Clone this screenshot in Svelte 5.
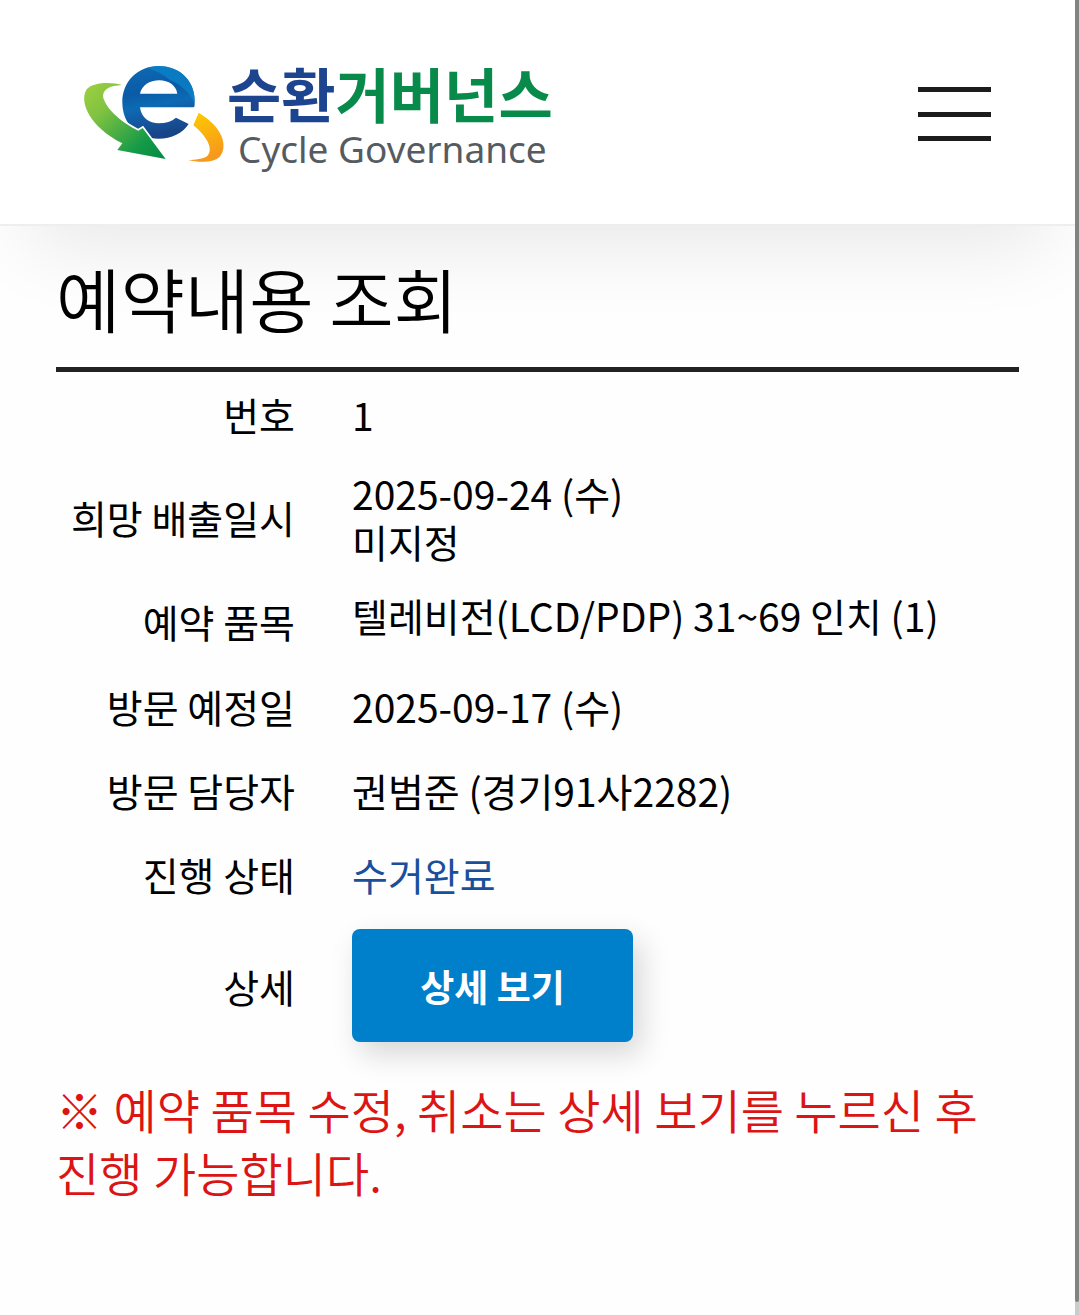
<script lang="ts">
    type Row = { label: string; value: string; kind?: 'status' | 'items' }

    const rows: Row[] = [
        { label: '번호',          value: '1' },
        { label: '희망 배출일시', value: '2025-09-24 (수)\n미지정' },
        { label: '예약 품목',     value: '텔레비전(LCD/PDP) 31~69 인치 (1)', kind: 'items' },
        { label: '방문 예정일',   value: '2025-09-17 (수)' },
        { label: '방문 담당자',   value: '권범준 (경기91사2282)' },
        { label: '진행 상태',     value: '수거완료', kind: 'status' },
    ]
</script>

<header>
    <a class="logo" href="/" aria-label="순환거버넌스 Cycle Governance">
        <svg width="476" height="112" viewBox="0 0 476 112">
            <defs>
                <linearGradient id="leaf" x1="0" y1="0" x2="1" y2="1">
                    <stop offset="0" stop-color="#a0d040" />
                    <stop offset="0.3" stop-color="#7fc241" />
                    <stop offset="0.75" stop-color="#159a48" />
                    <stop offset="1" stop-color="#008a44" />
                </linearGradient>
                <linearGradient id="sea" x1="0" y1="0" x2="0.2" y2="1">
                    <stop offset="0" stop-color="#0f6bb5" />
                    <stop offset="0.4" stop-color="#0a5ba6" />
                    <stop offset="0.6" stop-color="#0d6ab4" />
                    <stop offset="1" stop-color="#1a4488" />
                </linearGradient>
                <linearGradient id="sun" x1="0" y1="0" x2="0.3" y2="1">
                    <stop offset="0" stop-color="#ffcc00" />
                    <stop offset="1" stop-color="#f6991c" />
                </linearGradient>
            </defs>
            <g transform="scale(0.3333) translate(-42 -24)">
                <path fill="url(#sea)" fill-rule="evenodd" d="M370 172H210C214 204 238 220 266 220C288 220 305 214 318 203L356 222C338 250 305 266 266 266C200 266 157 220 157 157C157 94 204 48 266 48C334 48 378 98 374 160C374 168 374 172 370 172ZM210 131H322C318 106 296 91 268 91C238 91 216 106 210 131Z" />
                <path fill="#0a86cc" opacity="0.7" d="M232 54C243 50 254 48 266 48C334 48 378 98 374 160C360 130 335 105 300 90C278 72 255 60 232 54Z" />
                <path fill="url(#leaf)" stroke="#fff" stroke-width="10" paint-order="stroke" d="M155 105C125 96 70 96 50 118C26 156 60 232 157 280L142 300L287 327L218 234L205 242C160 220 112 182 100 144C95 118 120 107 155 105Z" />
                <path fill="url(#sun)" d="M386 188L370 226C410 258 432 298 412 318C400 328 375 328 355 331C390 338 430 338 448 322C480 285 450 225 386 188Z" />
            </g>
            <text class="ko" x="143" y="60"><tspan class="navy">순환</tspan><tspan class="green">거버넌스</tspan></text>
            <text class="en" x="154" y="105">Cycle Governance</text>
        </svg>
    </a>
    <button class="menu" type="button" aria-label="메뉴">
        <span></span>
        <span></span>
        <span></span>
    </button>
</header>

<main>
    <h1>예약내용 조회</h1>
    <table>
        <tbody>
            {#each rows as row}
                <tr>
                    <th scope="row">{row.label}</th>
                    <td><div class="value {row.kind ?? ''}">{row.value}</div></td>
                </tr>
            {/each}
            <tr>
                <th scope="row">상세</th>
                <td><button class="detail" type="button">상세 보기</button></td>
            </tr>
        </tbody>
    </table>
    <p class="notice">※ 예약 품목 수정, 취소는 상세 보기를 누르신 후 진행 가능합니다.</p>
</main>

<div class="scroll"><div class="thumb"></div></div>

<style>
    :global(body) {
        background: #fefefe;
        color: #000;
        font-family: 'Noto Sans CJK KR', sans-serif;
    }
    header {
        position: relative;
        box-sizing: border-box;
        height: 226px;
        padding: 4px 88px 0 84px;
        display: flex;
        align-items: center;
        justify-content: space-between;
        background: #fff;
        border-bottom: 2px solid #eee;
        box-shadow: 0 50px 80px -30px rgba(0, 0, 0, 0.09);
    }
    .logo {
        display: block;
        height: 112px;
    }
    svg {
        display: block;
        overflow: visible;
    }
    .ko {
        font-size: 59px;
        font-weight: 700;
    }
    .navy  { fill: #1d448f; }
    .green { fill: #088a4b; }
    .en {
        font-family: 'Noto Sans', sans-serif;
        font-size: 37px;
        fill: #555b60;
    }
    .menu {
        width: 73px;
        height: 54px;
        padding: 0;
        display: flex;
        flex-direction: column;
        justify-content: space-between;
        background: none;
        border: 0;
        cursor: pointer;
    }
    .menu span {
        height: 5px;
        background: #1c1c1c;
    }

    main {
        padding: 24px 60px 60px 56px;
    }
    h1 {
        margin: 0;
        padding-bottom: 21px;
        border-bottom: 5px solid #222;
        font-size: 70px;
        font-weight: 350;
        line-height: 96px;
    }
    table {
        width: 100%;
        border-collapse: collapse;
        font-size: 39px;
        line-height: 48px;
    }
    th, td {
        padding: 13px 0;
        vertical-align: middle;
        font-weight: 400;
    }
    th {
        width: 239px;
        padding-right: 57px;
        text-align: right;
        line-height: 58px;
        white-space: nowrap;
    }
    td { text-align: left; }
    .value  { white-space: pre-line; }
    .items  { padding-bottom: 12px; }
    .status { color: #1a4f9c; }
    .detail {
        display: block;
        width: 281px;
        height: 113px;
        padding: 0;
        border: 0;
        border-radius: 8px;
        background: #0080cb;
        box-shadow: 8px 12px 30px rgba(0, 0, 0, 0.16);
        color: #fff;
        font-family: inherit;
        font-size: 37px;
        font-weight: 700;
        cursor: pointer;
    }
    .notice {
        margin: 22px 0 0;
        color: #dc1414;
        font-size: 47px;
        font-weight: 350;
        line-height: 63px;
    }

    .scroll {
        position: fixed;
        top: 0;
        right: 0;
        bottom: 0;
        width: 4px;
        background: #ccc;
    }
    .thumb {
        height: 99%;
        background: #828282;
        border-radius: 0 0 2px 2px;
    }
</style>
